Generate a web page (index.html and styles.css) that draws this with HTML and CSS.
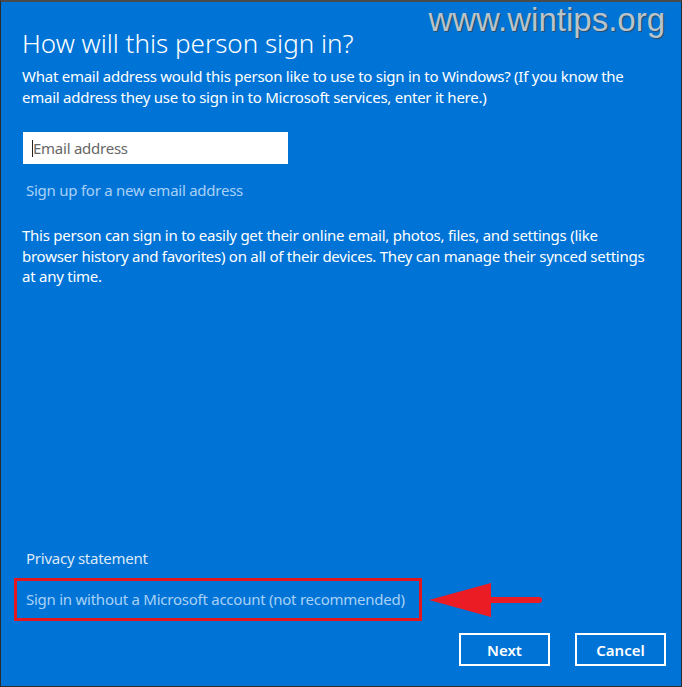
FILE: index.html
```html
<!DOCTYPE html>
<html lang="en">
  <head>
    <meta charset="UTF-8" />
    <meta name="viewport" content="width=device-width, initial-scale=1.0" />
    <title>Add account</title>
    <link rel="stylesheet" href="styles.css">
  </head>

  <body>
    <div class="window">
      <div class="watermark">www.wintips.org</div>

      <h1 class="title">How will this person sign in?</h1>
      <p class="intro">
        What email address would this person like to use to sign in to Windows? (If you know the<br />
        email address they use to sign in to Microsoft services, enter it here.)
      </p>

      <div class="emailBox">
        <span class="caret"></span>
        <span class="placeholder">Email address</span>
      </div>

      <a class="link signUp" href="#">Sign up for a new email address</a>

      <p class="info">
        This person can sign in to easily get their online email, photos, files, and settings (like<br />
        browser history and favorites) on all of their devices. They can manage their synced settings<br />
        at any time.
      </p>

      <div class="spacer"></div>

      <a class="privacy" href="#">Privacy statement</a>

      <div class="localRow">
        <div class="highlight">
          <a class="link" href="#">Sign in without a Microsoft account (not recommended)</a>
        </div>
        <svg class="arrow" width="120" height="40" viewBox="0 0 120 40">
          <polygon points="4,20 66,3 66,37" fill="#ec1c24" />
          <line x1="60" y1="20" x2="114" y2="20" stroke="#ec1c24" stroke-width="6" stroke-linecap="round" />
        </svg>
      </div>

      <div class="buttonBar">
        <button class="btn">Next</button>
        <button class="btn">Cancel</button>
      </div>
    </div>
  </body>
</html>
```

FILE: styles.css
```css
body {
  margin: 0;
  background: #3a3a3a;
}

.window {
  position: relative;
  box-sizing: border-box;
  width: 682px;
  height: 687px;
  border-top: 2px solid #4a4a4a;
  border-left: 1px solid #2a2a2a;
  border-right: 1px solid #2a2a2a;
  border-bottom: 1px solid #2a2a2a;
  background: #0074d6;
  color: #ffffff;
  font-family: "Noto Sans", "Open Sans", sans-serif;
  font-size: 15px;
  letter-spacing: -0.25px;
  display: flex;
  flex-direction: column;
  padding: 0 22px 20px 21px;
}

.watermark {
  position: absolute;
  top: -1px;
  right: 16px;
  font-family: "Liberation Sans", Arial, sans-serif;
  font-size: 33px;
  letter-spacing: 0;
  color: #b9c3cc;
  text-shadow: 1px 1px 1px #2b4a66;
}

.title {
  margin: 25px 0 0;
  font-weight: 300;
  font-size: 26px;
  line-height: 32px;
  letter-spacing: 0;
}

.intro {
  margin: 7px 0 0;
  line-height: 21px;
}

.emailBox {
  margin: 24px 0 0 1px;
  width: 256px;
  height: 32px;
  background: #ffffff;
  display: flex;
  align-items: center;
  padding-left: 9px;
}

.caret {
  width: 1px;
  height: 17px;
  background: #222;
}

.placeholder {
  color: #666;
}

.link {
  color: #a9d1f6;
  text-decoration: none;
}

.signUp {
  margin: 16px 0 0 4px;
}

.info {
  margin: 25px 0 0;
  line-height: 20.5px;
}

.spacer {
  flex: 1;
}

.privacy {
  margin-left: 4px;
  color: #dde9f6;
  text-decoration: none;
}

.localRow {
  display: flex;
  align-items: center;
  margin: 10px 0 0 -8px;
}

.highlight {
  border: 3px solid #e2171f;
  padding: 8px 14px 9px 9px;
}

.arrow {
  margin-left: 3px;
}

.buttonBar {
  display: flex;
  justify-content: flex-end;
  gap: 25px;
  margin-top: 12px;
  margin-right: -7px;
}

.btn {
  width: 91px;
  height: 33px;
  background: #0074d6;
  border: 2px solid #ffffff;
  color: #ffffff;
  font-family: "Noto Sans", "Open Sans", sans-serif;
  font-size: 15px;
  font-weight: 600;
}
```
